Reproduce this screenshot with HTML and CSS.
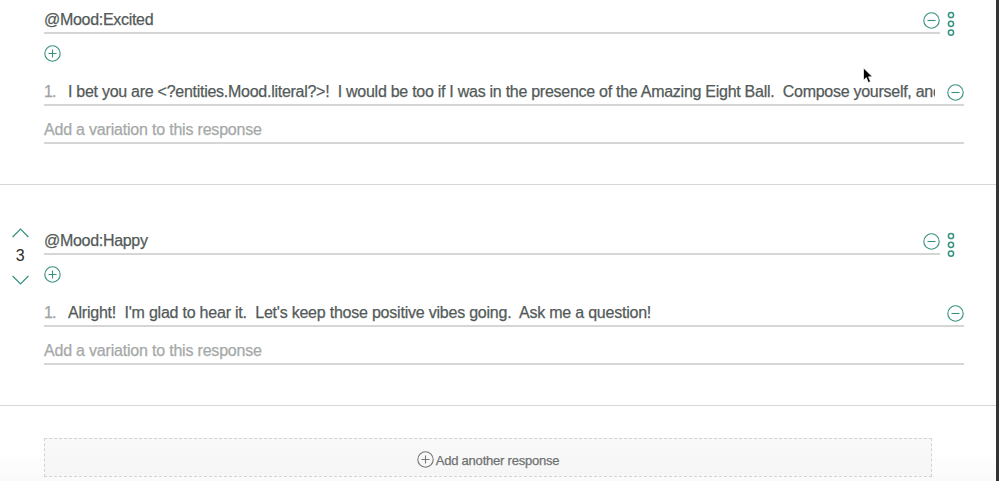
FILE: index.html
```html
<!DOCTYPE html>
<html lang="en">
<head>
<meta charset="utf-8">
<title>Responses</title>
<link rel="stylesheet" href="styles.css">
</head>
<body>
<svg class="defs" width="0" height="0">
  <symbol id="plus" viewBox="0 0 17 17"><circle cx="8.5" cy="8.5" r="7.7"/><path d="M4.5 8.5h8M8.5 4.5v8"/></symbol>
  <symbol id="minus" viewBox="0 0 17 17"><circle cx="8.5" cy="8.5" r="7.7"/><path d="M4.5 8.5h8"/></symbol>
  <symbol id="dots" viewBox="0 0 8 26"><circle cx="4" cy="4" r="2.6"/><circle cx="4" cy="12.8" r="2.6"/><circle cx="4" cy="21.6" r="2.6"/></symbol>
</svg>
<main class="panel">
  <section class="response response-first">
    <div class="order"></div>
    <div class="fields">
      <div class="condition-row">
        <div class="line condition"><span class="text">@Mood:Excited</span><svg class="icon"><use href="#minus"/></svg></div>
        <svg class="dots"><use href="#dots"/></svg>
      </div>
      <div class="add-condition"><svg class="icon"><use href="#plus"/></svg></div>
      <div class="line variation"><span class="number">1.</span><span class="text value long">I bet you are &lt;?entities.Mood.literal?&gt;!  I would be too if I was in the presence of the Amazing Eight Ball.  Compose yourself, and</span><svg class="icon"><use href="#minus"/></svg></div>
      <div class="line placeholder"><span class="text">Add a variation to this response</span></div>
    </div>
  </section>
  <section class="response">
    <div class="order">
      <svg class="chevron" viewBox="0 0 17 10"><path d="M.6 9 8.5 1l7.9 8"/></svg>
      <span class="order-number">3</span>
      <svg class="chevron" viewBox="0 0 17 10"><path d="M.6 1l7.9 8 7.9-8"/></svg>
    </div>
    <div class="fields">
      <div class="condition-row">
        <div class="line condition"><span class="text">@Mood:Happy</span><svg class="icon"><use href="#minus"/></svg></div>
        <svg class="dots"><use href="#dots"/></svg>
      </div>
      <div class="add-condition"><svg class="icon"><use href="#plus"/></svg></div>
      <div class="line variation"><span class="number">1.</span><span class="text value short">Alright!  I'm glad to hear it.  Let's keep those positive vibes going.  Ask me a question!</span><svg class="icon"><use href="#minus"/></svg></div>
      <div class="line placeholder"><span class="text">Add a variation to this response</span></div>
    </div>
  </section>
  <div class="footer">
    <div class="add-response"><svg class="icon"><use href="#plus"/></svg><span class="add-label">Add another response</span></div>
  </div>
</main>
<svg class="cursor" viewBox="0 0 12 18"><path d="M1.5 1v12.2l2.8-2.6 2 4.9 2.2-.9-2-4.8h3.9z"/></svg>
</body>
</html>
```
FILE: styles.css
```css
* { box-sizing: border-box; }
body {
  margin: 0;
  height: 481px;
  overflow: hidden;
  background: #fff;
  color: #535a59;
  font: 16px/22px "Liberation Sans", Arial, sans-serif;
  letter-spacing: -0.3px;
  -webkit-text-stroke: 0.25px;
}
.defs { position: absolute; }
svg { display: block; flex: none; fill: none; stroke: #35907f; }
.panel {
  height: 481px;
  border-right: 3px solid #333;
  background: linear-gradient(#fff 450px, #fafafa 481px);
}
.response {
  display: flex;
  height: 221px;
  padding-top: 45px;
  border-bottom: 1px solid #d6d6d6;
}
.response-first { height: 185px; padding-top: 9px; }
.order { width: 44px; padding: 0 0 0 12px; margin-top: -2px; }
.order-number { display: block; width: 16px; height: 37px; padding-top: 7px; text-align: center; color: #2b2b2b; -webkit-text-stroke: 0; }
.chevron { width: 17px; height: 10px; stroke-width: 1.2; }
.fields { width: 920px; }
.condition-row { display: flex; gap: 7px; height: 25px; }
.line { display: flex; align-items: flex-start; border-bottom: 2px solid #d6d6d6; }
.condition { width: 896px; }
.condition .text { flex: 1; }
.icon { width: 17px; height: 17px; stroke-width: 1.1; }
.condition .icon { margin-top: 3px; }
.dots { width: 8px; height: 26px; margin-top: 2px; stroke-width: 1.5; }
.add-condition { height: 47px; padding-top: 11px; }
.variation { height: 25px; }
.number { width: 24px; color: #a0a3a2; letter-spacing: -1px; }
.value { flex: none; width: 867px; margin-right: 12px; overflow: hidden; white-space: pre; }
.long { letter-spacing: -0.27px; }
.short { letter-spacing: -0.22px; }
.variation .icon { margin-top: 3px; }
.placeholder { height: 38px; padding-top: 13px; color: #a5a9a8; letter-spacing: -0.2px; }
.footer { padding: 32px 0 0 44px; }
.add-response {
  display: flex;
  justify-content: center;
  align-items: center;
  gap: 2px;
  width: 888px;
  height: 39px;
  padding-top: 7px;
  border: 1px dashed #d3d3d3;
  background: linear-gradient(#f9f9f9, #f6f6f6);
  color: #6f7272;
  font-size: 13px;
  letter-spacing: -0.22px;
}
.add-response .icon { stroke: #777; margin-top: -4px; }
.cursor { position: absolute; left: 862px; top: 67px; width: 12px; height: 18px; }
.cursor path { fill: #000; stroke: #fff; stroke-width: .7; }
```
